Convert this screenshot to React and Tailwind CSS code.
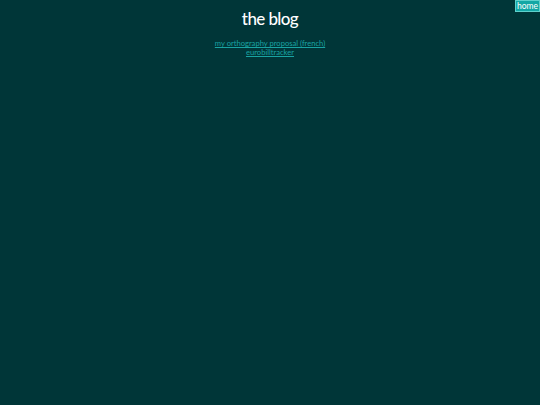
export default function App() {
  return (
    <div className="relative min-h-[405px] w-full bg-[#003638]" style={{ fontFamily: 'Lato, "Liberation Sans", sans-serif' }}>
      <a href="#" className="absolute right-0 top-0 bg-[#13a7a5] border border-[#5fd0cc] px-[1px] text-[8.5px] leading-[10px] text-white">home</a>
      <div className="flex flex-col items-center pt-[8px]">
        <h1 className="text-[17px] leading-[22px] font-medium tracking-[-0.6px] text-white">the blog</h1>
        <div className="mt-[9px] flex flex-col items-center text-[7.6px] leading-[9px]">
          <a href="#" className="text-[#19a3a2] underline">my orthography proposal (french)</a>
          <a href="#" className="text-[#19a3a2] underline">eurobilltracker</a>
        </div>
      </div>
    </div>
  )
}
